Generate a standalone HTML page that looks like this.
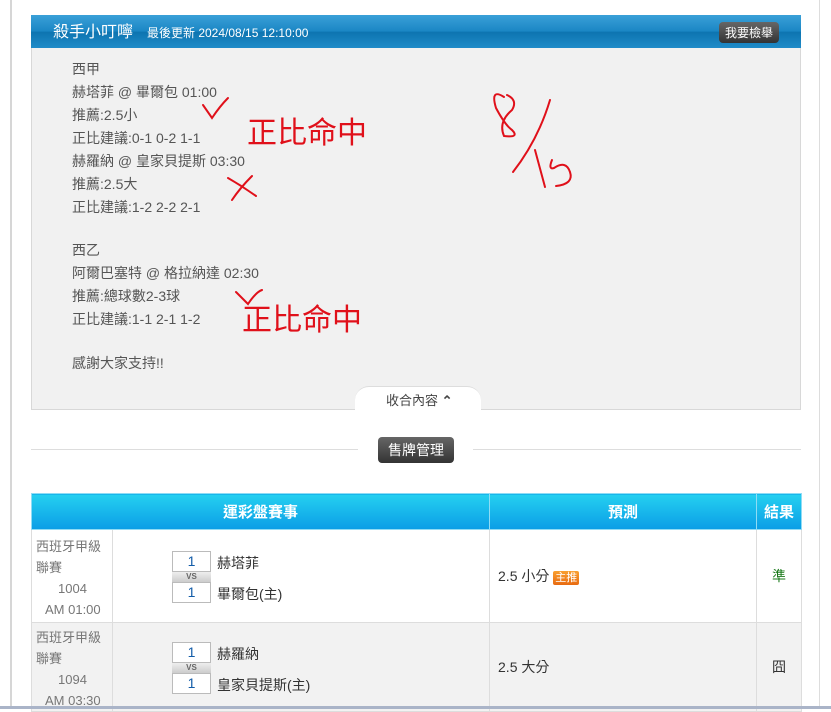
<!DOCTYPE html>
<html><head><meta charset="utf-8"><style>
body{margin:0;width:831px;height:709px;overflow:hidden;background:#fff;font-family:"Liberation Sans","Noto Sans CJK TC",sans-serif;position:relative}
.abs{position:absolute}
.vl{left:10px;top:0;width:2px;height:709px;background:#d6d6d6}
.vr{left:819px;top:0;width:1px;height:709px;background:#ddd}
.panel{left:31px;top:15px;width:768px;height:393px;background:#f1f1f1;border:1px solid #d8d8d8}
.hdr{left:31px;top:15px;width:770px;height:33px;background:linear-gradient(#3aa0d8,#1a86c4 50%,#0d74b0 51%,#1f8bc8);color:#fff}
.lines{left:72px;top:58px;font-size:14px;color:#555;line-height:23px}
.lines div{height:23px}
.btn{background:linear-gradient(#666,#333);color:#fff;border-radius:4px;font-size:12px}
table{position:absolute;left:31px;top:493px;width:770px;border-collapse:collapse;font-size:14px;table-layout:fixed}
th{background:linear-gradient(#25d0f0,#0a9de6);color:#fff;height:35px;font-size:15px;border:1px solid #8fdcf5;font-weight:bold;padding:0}
td{border:1px solid #ddd;color:#333;padding:0}
.sc{display:inline-block;width:37px;height:19px;border:1px solid #bbb;text-align:center;color:#135ca8;background:#fff;line-height:19px}
.vs{width:39px;height:10px;font-size:8px;line-height:10px;text-align:center;background:linear-gradient(#eee,#ccc);color:#666;font-weight:bold}
</style></head><body>
<div class="abs vl"></div><div class="abs vr"></div>
<div class="abs panel"></div>
<div class="abs hdr"><span class="abs" style="left:22px;top:8px;font-size:16px;line-height:20px">殺手小叮嚀</span><span class="abs" style="left:116px;top:9px;font-size:12px">最後更新 2024/08/15 12:10:00</span><span class="abs btn" style="left:688px;top:7px;padding:2px 6px">我要檢舉</span></div>
<div class="abs lines"><div>西甲</div><div>赫塔菲 @ 畢爾包 01:00</div><div>推薦:2.5小</div><div>正比建議:0-1 0-2 1-1</div><div>赫羅納 @ 皇家貝提斯 03:30</div><div>推薦:2.5大</div><div>正比建議:1-2 2-2 2-1</div><div style="height:20px"></div><div>西乙</div><div>阿爾巴塞特 @ 格拉納達 02:30</div><div>推薦:總球數2-3球</div><div>正比建議:1-1 2-1 1-2</div><div style="height:21px"></div><div>感謝大家支持!!</div></div>
<svg class="abs" style="left:0;top:0" width="831" height="400">
<g fill="none" stroke="#e0101a" stroke-width="2" stroke-linecap="round">
<path d="M203 105 L212 118 Q220 106 228 98"/>
<path d="M228 178 Q242 186 256 196 M252 176 Q240 188 232 200"/>
<path d="M236 292 L248 304 Q256 292 262 290"/>
<path d="M504 97 Q490 88 496 108 Q505 125 512 130 Q520 138 504 136 Q498 122 512 110 Q518 100 507 95"/>
<path d="M550 100 Q538 140 513 172"/>
<path d="M535 150 L545 187"/>
<path d="M552 160 Q548 170 554 168 Q566 160 570 172 Q574 184 556 186"/>
</g>
<g fill="#e0101a" font-family="Noto Sans CJK TC,sans-serif" font-size="30"><text x="247" y="143">正比命中</text><text x="242" y="330">正比命中</text></g>
</svg>
<div class="abs" style="left:355px;top:386px;width:126px;height:23px;background:#fff;border-radius:14px 14px 0 0;border-top:1px solid #ddd"></div>
<div class="abs" style="left:386px;top:390px;font-size:13px;color:#444">收合內容 <b>⌃</b></div>
<div class="abs" style="left:31px;top:449px;width:327px;height:1px;background:#ddd"></div>
<div class="abs" style="left:473px;top:449px;width:328px;height:1px;background:#ddd"></div>
<div class="abs btn" style="left:378px;top:437px;width:76px;height:26px;line-height:26px;text-align:center;font-size:14px;border-radius:4px">售牌管理</div>
<table>
<colgroup><col style="width:81px"><col style="width:377px"><col style="width:267px"><col style="width:45px"></colgroup>
<tr><th colspan="2">運彩盤賽事</th><th>預測</th><th>結果</th></tr>
<tr style="height:93px"><td style="font-size:13px;color:#777;padding:4px 0 0 4px;line-height:21px">西班牙甲級<br>聯賽<br><span style="padding-left:22px">1004</span><br><span style="padding-left:9px">AM 01:00</span></td>
<td><div style="margin-left:59px;margin-top:4px;position:relative;height:55px"><div class="sc">1</div><div class="vs">VS</div><div class="sc">1</div><span class="abs" style="left:45px;top:2px">赫塔菲</span><span class="abs" style="left:45px;top:33px">畢爾包(主)</span></div></td>
<td style="padding-left:8px">2.5 小分 <span style="background:linear-gradient(#f9a030,#e86a10);color:#fff;font-size:11px;padding:1px 2px;border-radius:2px">主推</span></td>
<td style="text-align:center;color:#1a7a1a">準</td></tr>
<tr style="height:84px;background:#f2f2f2"><td style="font-size:13px;color:#777;padding:4px 0 0 4px;line-height:21px">西班牙甲級<br>聯賽<br><span style="padding-left:22px">1094</span><br><span style="padding-left:9px">AM 03:30</span></td>
<td><div style="margin-left:59px;margin-top:4px;position:relative;height:55px"><div class="sc">1</div><div class="vs">VS</div><div class="sc">1</div><span class="abs" style="left:45px;top:2px">赫羅納</span><span class="abs" style="left:45px;top:33px">皇家貝提斯(主)</span></div></td>
<td style="padding-left:8px">2.5 大分</td><td style="text-align:center">囧</td></tr>
</table>
<div class="abs" style="left:0;top:706px;width:831px;height:3px;background:#aab4c8"></div>
</body></html>
